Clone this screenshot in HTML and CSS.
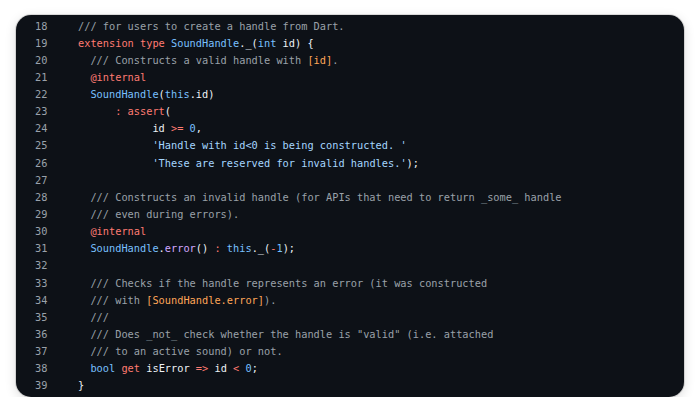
FILE: index.html
```html
<!DOCTYPE html>
<html>
<head>
<meta charset="utf-8">
<link rel="stylesheet" href="styles.css">
</head>
<body>
<div class="card">
  <div class="code">
    <div class="ln">18</div><div class="lc"><span class="c">/// for users to create a handle from Dart.</span></div>
    <div class="ln">19</div><div class="lc"><span class="k">extension type</span> <span class="b">SoundHandle</span>._(<span class="b">int</span> id) {</div>
    <div class="ln">20</div><div class="lc">  <span class="c">/// Constructs a valid handle with <span class="o">[id]</span>.</span></div>
    <div class="ln">21</div><div class="lc">  <span class="k">@internal</span></div>
    <div class="ln">22</div><div class="lc">  <span class="b">SoundHandle</span>(<span class="b">this</span>.id)</div>
    <div class="ln">23</div><div class="lc">      <span class="k">:</span> <span class="k">assert</span>(</div>
    <div class="ln">24</div><div class="lc">            id <span class="k">&gt;=</span> <span class="b">0</span>,</div>
    <div class="ln">25</div><div class="lc">            <span class="s">'Handle with id&lt;0 is being constructed. '</span></div>
    <div class="ln">26</div><div class="lc">            <span class="s">'These are reserved for invalid handles.'</span>);</div>
    <div class="ln">27</div><div class="lc"> </div>
    <div class="ln">28</div><div class="lc">  <span class="c">/// Constructs an invalid handle (for APIs that need to return _some_ handle</span></div>
    <div class="ln">29</div><div class="lc">  <span class="c">/// even during errors).</span></div>
    <div class="ln">30</div><div class="lc">  <span class="k">@internal</span></div>
    <div class="ln">31</div><div class="lc">  <span class="b">SoundHandle</span>.<span class="p">error</span>() <span class="k">:</span> <span class="b">this</span>._(<span class="k">-</span><span class="b">1</span>);</div>
    <div class="ln">32</div><div class="lc"> </div>
    <div class="ln">33</div><div class="lc">  <span class="c">/// Checks if the handle represents an error (it was constructed</span></div>
    <div class="ln">34</div><div class="lc">  <span class="c">/// with <span class="o">[SoundHandle.error]</span>).</span></div>
    <div class="ln">35</div><div class="lc">  <span class="c">///</span></div>
    <div class="ln">36</div><div class="lc">  <span class="c">/// Does _not_ check whether the handle is "valid" (i.e. attached</span></div>
    <div class="ln">37</div><div class="lc">  <span class="c">/// to an active sound) or not.</span></div>
    <div class="ln">38</div><div class="lc">  <span class="b">bool</span> <span class="k">get</span> isError <span class="k">=&gt;</span> id <span class="k">&lt;</span> <span class="b">0</span>;</div>
    <div class="ln">39</div><div class="lc">}</div>
  </div>
</div>
</body>
</html>
```
FILE: styles.css
```css
html, body {
  margin: 0;
  padding: 0;
  background: #ffffff;
}
.card {
  margin: 15px 16px 0 16px;
  width: 668px;
  height: 382px;
  box-sizing: border-box;
  background: #0d1117;
  border-radius: 15px;
  box-shadow: 0 0 0 1px rgba(0,0,0,0.12), 0 3px 12px rgba(0,0,0,0.14);
  overflow: hidden;
  padding-top: 2.5px;
}
.code {
  display: grid;
  grid-template-columns: 31.5px 1fr;
  column-gap: 30.5px;
  font-family: "DejaVu Sans Mono", monospace;
  font-size: 10.3px;
  line-height: 17.14px;
  color: #eef2f6;
}
.ln {
  text-align: right;
  color: #9aa2ab;
}
.lc {
  white-space: pre;
}
.c { color: #9aa1a9; }
.k { color: #ff7b72; }
.b { color: #79c0ff; }
.s { color: #a5d6ff; }
.p { color: #d2a8ff; }
.o { color: #ffa657; }
```
